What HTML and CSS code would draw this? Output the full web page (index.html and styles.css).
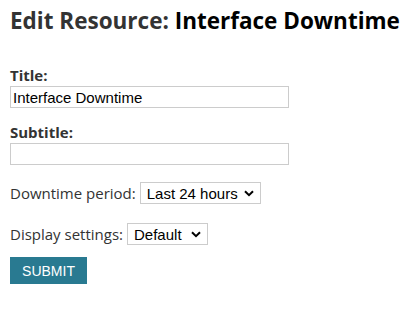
FILE: index.html
```html
<!DOCTYPE html>
<html lang="en">
<head>
    <meta charset="UTF-8">
    <title>Edit Resource</title>
    <link rel="stylesheet" href="styles.css">
</head>
<body>

    <h1 class="page-title"><span class="muted">Edit Resource:</span> Interface Downtime</h1>

    <form class="edit-form">
        <div class="field">
            <label for="title">Title:</label>
            <input type="text" id="title" name="title" value="Interface Downtime">
        </div>
        <div class="field">
            <label for="subtitle">Subtitle:</label>
            <input type="text" id="subtitle" name="subtitle">
        </div>
        <div class="inline-field">
            <label for="period">Downtime period:</label>
            <span class="select-wrap">
                <select id="period" name="period" class="period-select">
                    <option>Last 24 hours</option>
                    <option>Last 7 days</option>
                    <option>Last 30 days</option>
                </select>
                <svg class="chevron" width="10" height="7" viewBox="0 0 10 7"><path d="M1 1.2 L5 5.2 L9 1.2" fill="none" stroke="#000" stroke-width="2"/></svg>
            </span>
        </div>
        <div class="inline-field">
            <label for="display">Display settings:</label>
            <span class="select-wrap">
                <select id="display" name="display" class="display-select">
                    <option>Default</option>
                    <option>Compact</option>
                </select>
                <svg class="chevron" width="10" height="7" viewBox="0 0 10 7"><path d="M1 1.2 L5 5.2 L9 1.2" fill="none" stroke="#000" stroke-width="2"/></svg>
            </span>
        </div>
        <button type="button" class="submit">SUBMIT</button>
    </form>

</body>
</html>
```

FILE: styles.css
```css
body {
    margin: 0;
    padding: 6px 10px;
    font-family: "Open Sans", sans-serif;
    color: #333;
}

.page-title {
    margin: 0 0 29px 0;
    font-size: 22.5px;
    font-weight: bold;
    color: #000;
    line-height: 30px;
}

.page-title .muted {
    color: #333;
}

.field {
    margin-bottom: 14px;
}

.field label {
    display: block;
    font-size: 15px;
    font-weight: bold;
    line-height: 21px;
}

input {
    display: block;
    width: 279px;
    height: 22px;
    box-sizing: border-box;
    border: 1px solid #ccc;
    padding: 1px 2px;
    font-family: "Liberation Sans", Arial, sans-serif;
    font-size: 15px;
    color: #000;
    margin: 0;
}

.inline-field {
    font-size: 15px;
    height: 22px;
    display: flex;
    align-items: center;
    gap: 4px;
    margin-top: 17px;
}

.inline-field + .inline-field {
    margin-top: 19px;
}

.select-wrap {
    position: relative;
    display: block;
    height: 22px;
}

select {
    -webkit-appearance: none;
    appearance: none;
    font-family: "Liberation Sans", Arial, sans-serif;
    font-size: 15px;
    height: 22px;
    box-sizing: border-box;
    border: 1px solid #ccc;
    background: #fff;
    color: #000;
    border-radius: 0;
    padding: 0 0 0 6px;
    margin: 0;
}

.chevron {
    position: absolute;
    right: 7px;
    top: 8px;
    pointer-events: none;
}

.period-select {
    width: 121px;
}

.display-select {
    width: 81px;
}

.submit {
    display: block;
    margin-top: 12px;
    background-color: #297a91;
    border: none;
    color: white;
    font-family: "Liberation Sans", Arial, sans-serif;
    font-size: 14px;
    padding: 0;
    height: 27px;
    width: 77px;
    cursor: pointer;
}
```
